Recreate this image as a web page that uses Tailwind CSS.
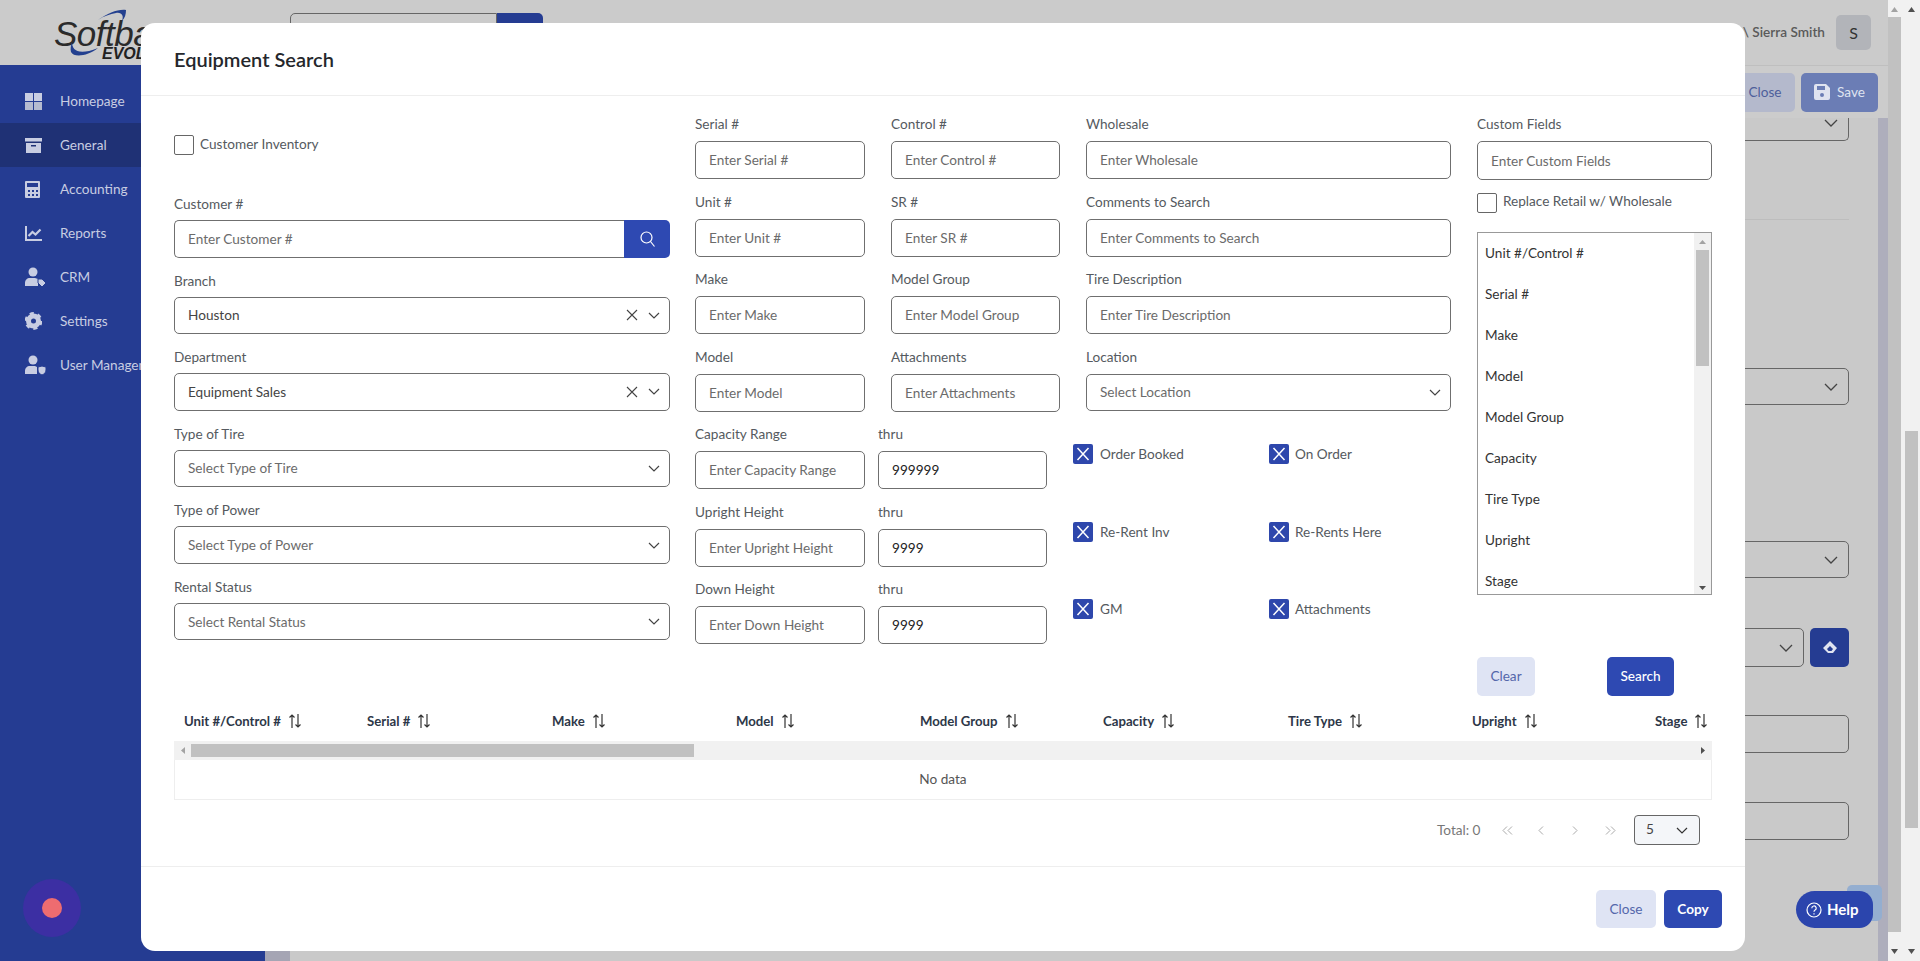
<!DOCTYPE html>
<html lang="en">

<head>
    <meta charset="UTF-8">
    <meta name="viewport" content="width=device-width, initial-scale=1">
    <title>Equipment Search</title>
    <script src="https://cdn.jsdelivr.net/npm/@tailwindcss/browser@4"></script>
</head>

<body class="[font-family:Lato,sans-serif] text-[13.6px]">
    <div class="relative flex h-[961px] w-[1920px] overflow-hidden bg-[#c9c9c9]">

        <!-- page behind the modal -->
        <aside class="flex w-[265px] shrink-0 flex-col">
            <div class="relative h-[65px] bg-[#cbcbcb]">
                <span class="absolute left-[54px] top-[20px] whitespace-nowrap [font-family:'Liberation_Sans',sans-serif] text-[35px] italic leading-[27px] tracking-[-0.5px] text-[#2b2b2b]">Softba</span>
                <span class="absolute left-[102px] top-[47px] [font-family:'Liberation_Sans',sans-serif] text-[16px] font-bold italic leading-[13px] text-[#222]">EVOL</span>
                <svg class="absolute left-[68px] top-[8px]" width="70" height="52" viewBox="0 0 70 52" fill="none">
                    <path d="M30 12C40 5 50 1 58 2C58 6 57 10 54 13C56 8 54 4 48 5C42 6 36 8 30 12Z" fill="#23408f" />
                    <path d="M4 34C4 42 10 48 30 40C20 48 6 50 3 44C2 41 3 37 4 34Z" fill="#23408f" />
                </svg>
            </div>
            <nav class="flex-1 bg-[#253c92] pt-[14px] text-[#c8cde2]">
                <a class="flex h-[44px] items-center gap-[18px] pl-[25px]">
                    <svg width="17" height="17" viewBox="0 0 17 17" fill="#c8cde2"><rect width="8" height="8" /><rect x="9" width="8" height="8" /><rect y="9" width="8" height="8" fill="#b5bbd0" /><rect x="9" y="9" width="8" height="8" fill="#b5bbd0" /></svg>
                    <span>Homepage</span>
                </a>
                <a class="flex h-[44px] items-center gap-[18px] bg-[#1f3175] pl-[25px]">
                    <svg width="17" height="17" viewBox="0 0 17 17" fill="#c8cde2"><rect y="1" width="17" height="3.5" /><path d="M1 6h15v10H1zM6 8v1.5h5V8z" fill-rule="evenodd" /></svg>
                    <span>General</span>
                </a>
                <a class="flex h-[44px] items-center gap-[18px] pl-[25px]">
                    <svg width="17" height="17" viewBox="0 0 17 17" fill="#c8cde2"><path fill-rule="evenodd" d="M1 0h13a1 1 0 0 1 1 1v15a1 1 0 0 1-1 1H1a1 1 0 0 1-1-1V1a1 1 0 0 1 1-1zM2 2v4h11V2zM3 9v2h2V9zM7 9v2h2V9zM11 9v2h2V9zM3 13v2h2v-2zM7 13v2h2v-2zM11 13v2h2v-2z" /></svg>
                    <span>Accounting</span>
                </a>
                <a class="flex h-[44px] items-center gap-[18px] pl-[25px]">
                    <svg width="17" height="17" viewBox="0 0 17 17" fill="none" stroke="#c8cde2"><path d="M1 1v14h16" stroke-width="2" /><path d="M3.5 11l4-4 3 2.500 5-5" stroke-width="2.200" /></svg>
                    <span>Reports</span>
                </a>
                <a class="flex h-[44px] items-center gap-[18px] pl-[25px]">
                    <svg width="21" height="20" viewBox="0 0 21 20" fill="#c8cde2"><circle cx="8" cy="5" r="4.500" /><path d="M0 19v-3c0-3 2-5 5-5h5l3 1v7z" /><path d="M13 12h4l4 4-4 4-4-4z" stroke="#253c92" /></svg>
                    <span class="-ml-[4px]">CRM</span>
                </a>
                <a class="flex h-[44px] items-center gap-[18px] pl-[25px]">
                    <svg width="17" height="18" viewBox="0 0 17 18" fill="none"><circle cx="8.500" cy="9" r="5" stroke="#c8cde2" stroke-width="5" /><circle cx="8.500" cy="9" r="7.500" stroke="#c8cde2" stroke-width="2.800" stroke-dasharray="4 3.850" /></svg>
                    <span>Settings</span>
                </a>
                <a class="flex h-[44px] items-center gap-[18px] pl-[25px]">
                    <svg width="21" height="20" viewBox="0 0 21 20" fill="#c8cde2"><circle cx="8" cy="5" r="4.500" /><path d="M0 19v-3c0-3 2-5 5-5h5l2 1v7z" /><path d="M13 12l4-1 4 1v3c0 3-2 4-4 5-2-1-4-2-4-5z" stroke="#253c92" /></svg>
                    <span class="-ml-[4px] whitespace-nowrap">User Management</span>
                </a>
            </nav>
        </aside>

        <main class="flex min-w-0 flex-1 flex-col">
            <header class="flex h-[65px] items-start justify-between bg-[#cbcbcb] pl-[25px] pr-[17px]">
                <div class="mt-[13px] flex h-[38px] w-[253px]">
                    <div class="flex-1 rounded-l-[5px] border border-[#666]"></div>
                    <div class="w-[46px] rounded-r-[5px] bg-[#253c92]"></div>
                </div>
                <div class="flex items-center gap-[11px] pt-[15px]">
                    <span class="whitespace-nowrap font-semibold text-[#5a5a5a]">\ Sierra Smith</span>
                    <span class="flex h-[35px] w-[35px] items-center justify-center rounded-[5px] bg-[#b2b4b9] text-[16px] text-[#333]">S</span>
                </div>
            </header>
            <div class="flex h-[53px] items-center justify-end gap-[6px] border-t border-[#bfbfbf] bg-[#cccccc] pr-[10px]">
                <button class="h-[39px] w-[60px] rounded-[5px] bg-[#b4b9cc] text-[#4e5f9b]">Close</button>
                <button class="flex h-[39px] w-[77px] items-center justify-center gap-[7px] rounded-[5px] bg-[#6b7db5] text-[#dfe3f0]">
                    <svg width="16" height="16" viewBox="0 0 16 16" fill="#dfe3f0"><path fill-rule="evenodd" d="M2 0h10l4 4v10a2 2 0 0 1-2 2H2a2 2 0 0 1-2-2V2a2 2 0 0 1 2-2zM3 2v4h8V2zM8 9a2 2 0 1 0 0 4 2 2 0 0 0 0-4z" /></svg>
                    Save
                </button>
            </div>
            <div class="flex flex-1">
                <div class="w-[25px] bg-[#a5a5b4]"></div>
                <div class="flex flex-1 flex-col pr-[29px]">
                    <div class="h-[23px] rounded-b-[5px] border border-t-0 border-[#666]">
                        <svg class="ml-auto mr-[10px] mt-[1px]" width="14" height="8" viewBox="0 0 14 8" fill="none" stroke="#444" stroke-width="1.300"><path d="M1 1l6 6 6-6" /></svg>
                    </div>
                    <div class="mt-[78px] h-px bg-[#bdbdbd]"></div>
                    <div class="mt-[148px] flex h-[37px] items-center justify-end rounded-[5px] border border-[#666] pr-[10px]">
                        <svg width="14" height="8" viewBox="0 0 14 8" fill="none" stroke="#444" stroke-width="1.300"><path d="M1 1l6 6 6-6" /></svg>
                    </div>
                    <div class="mt-[136px] flex h-[37px] items-center justify-end rounded-[5px] border border-[#666] pr-[10px]">
                        <svg width="14" height="8" viewBox="0 0 14 8" fill="none" stroke="#444" stroke-width="1.300"><path d="M1 1l6 6 6-6" /></svg>
                    </div>
                    <div class="mt-[50px] flex h-[39px] gap-[6px]">
                        <div class="flex flex-1 items-center justify-end rounded-[5px] border border-[#666] pr-[10px]">
                            <svg width="14" height="8" viewBox="0 0 14 8" fill="none" stroke="#444" stroke-width="1.300"><path d="M1 1l6 6 6-6" /></svg>
                        </div>
                        <div class="flex w-[39px] items-center justify-center rounded-[5px] bg-[#253c92]">
                            <svg width="14" height="13" viewBox="0 0 14 13" fill="#dfe3f0"><path d="M7 0l7 7-4 5H5L0 7zM7 5L4 8l1.500 2h3L10 8z" fill-rule="evenodd" /></svg>
                        </div>
                    </div>
                    <div class="mt-[48px] h-[38px] rounded-[5px] border border-[#666]"></div>
                    <div class="mt-[49px] h-[38px] rounded-[5px] border border-[#666]"></div>
                </div>
                <div class="w-[10px] bg-[#aeaebc]"></div>
            </div>
        </main>

        <!-- page scrollbars -->
        <div class="flex w-[15px] shrink-0 flex-col bg-[#f1f1f1]">
            <svg class="ml-[3px] mt-[7px] shrink-0" width="7" height="5" viewBox="0 0 7 5" fill="#a3a3a3"><path d="M3.500 0L7 5H0z" /></svg>
            <div class="mt-[5px] h-[915px] w-[13px] shrink-0 bg-[#c1c1c1]"></div>
            <svg class="ml-[3px] mt-[17px] shrink-0" width="7" height="5" viewBox="0 0 7 5" fill="#505050"><path d="M0 0h7L3.500 5z" /></svg>
        </div>
        <div class="flex w-[17px] shrink-0 flex-col bg-[#f1f1f1]">
            <svg class="ml-[5px] mt-[7px] shrink-0" width="7" height="5" viewBox="0 0 7 5" fill="#505050"><path d="M3.500 0L7 5H0z" /></svg>
            <div class="ml-[2px] mt-[419px] h-[397px] w-[13px] shrink-0 bg-[#c1c1c1]"></div>
            <svg class="ml-[5px] mt-[121px] shrink-0" width="7" height="5" viewBox="0 0 7 5" fill="#505050"><path d="M0 0h7L3.500 5z" /></svg>
        </div>

        <!-- recording dot, help -->
        <div class="absolute left-[23px] top-[879px] flex h-[58px] w-[58px] items-center justify-center rounded-full bg-[#3c2fa3]">
            <div class="h-[20px] w-[20px] rounded-full bg-[#ee6c70]"></div>
        </div>
        <div class="absolute left-[1847px] top-[885px] h-[36px] w-[35px] rounded-[5px] bg-[#94aed0]"></div>
        <div class="absolute left-[1796px] top-[891px] flex h-[37px] w-[77px] items-center gap-[5px] rounded-l-[19px] rounded-r-[14px] bg-[#2b45ad] pl-[10px] text-[15px] font-bold text-white">
            <svg width="16" height="16" viewBox="0 0 16 16" fill="none" stroke="#fff" stroke-width="1.200"><circle cx="8" cy="8" r="7" /><path d="M5.800 6.200a2.200 2.200 0 1 1 3.300 1.900c-.7.400-1.100.8-1.100 1.600" /><path d="M8 11.200v1.200" /></svg>
            Help
        </div>

        <!-- modal -->
        <div class="absolute left-[141px] top-[23px] flex h-[928px] w-[1604px] flex-col rounded-[14px] bg-white text-[#555a60]">
            <div class="flex h-[73px] shrink-0 items-center border-b border-[#eeeeee] pl-[33px]">
                <h1 class="text-[20px] font-semibold text-[#25272c]">Equipment Search</h1>
            </div>

            <div class="flex h-[604px] shrink-0 pl-[33px] pt-[16px]">
                <!-- left column -->
                <div class="w-[496px] shrink-0">
                    <label class="mt-[23px] flex h-[20px] items-center gap-[6px]">
                        <span class="h-[20px] w-[20px] rounded-[2px] border border-[#666]"></span>
                        <span class="-mt-[2px]">Customer Inventory</span>
                    </label>
                    <div class="mt-[37px] grid auto-rows-[76.6px]">
                        <div>
                            <div class="mb-[4px] h-[24px] leading-[24px]">Customer #</div>
                            <div class="flex h-[37.500px]">
                                <input class="h-full min-w-0 flex-1 rounded-l-[5px] border border-r-0 border-[#6f6f6f] px-[13px] outline-none placeholder:text-[#6b6b6b]" placeholder="Enter Customer #">
                                <button class="flex w-[46px] items-center justify-center rounded-r-[5px] bg-[#2e49b2]">
                                    <svg width="15" height="16" viewBox="0 0 15 16" fill="none" stroke="#fff" stroke-width="1.200"><circle cx="6.500" cy="6.500" r="5.500" /><path d="M10.500 10.500l4 5" /></svg>
                                </button>
                            </div>
                        </div>
                        <div>
                            <div class="mb-[4px] h-[24px] leading-[24px]">Branch</div>
                            <div class="flex h-[37.500px] items-center rounded-[5px] border border-[#6f6f6f] pl-[13px] pr-[9px] text-[#444]">
                                <span class="flex-1">Houston</span>
                                <svg class="mr-[10px]" width="12" height="12" viewBox="0 0 12 12" fill="none" stroke="#444" stroke-width="1.100"><path d="M1 1l10 10M11 1L1 11" /></svg>
                                <svg width="12" height="7" viewBox="0 0 12 7" fill="none" stroke="#444" stroke-width="1.200"><path d="M1 1l5 5 5-5" /></svg>
                            </div>
                        </div>
                        <div>
                            <div class="mb-[4px] h-[24px] leading-[24px]">Department</div>
                            <div class="flex h-[37.500px] items-center rounded-[5px] border border-[#6f6f6f] pl-[13px] pr-[9px] text-[#444]">
                                <span class="flex-1">Equipment Sales</span>
                                <svg class="mr-[10px]" width="12" height="12" viewBox="0 0 12 12" fill="none" stroke="#444" stroke-width="1.100"><path d="M1 1l10 10M11 1L1 11" /></svg>
                                <svg width="12" height="7" viewBox="0 0 12 7" fill="none" stroke="#444" stroke-width="1.200"><path d="M1 1l5 5 5-5" /></svg>
                            </div>
                        </div>
                        <div>
                            <div class="mb-[4px] h-[24px] leading-[24px]">Type of Tire</div>
                            <div class="flex h-[37.500px] items-center justify-between rounded-[5px] border border-[#6f6f6f] pl-[13px] pr-[9px] text-[#6b6b6b]">
                                Select Type of Tire
                                <svg width="12" height="7" viewBox="0 0 12 7" fill="none" stroke="#444" stroke-width="1.200"><path d="M1 1l5 5 5-5" /></svg>
                            </div>
                        </div>
                        <div>
                            <div class="mb-[4px] h-[24px] leading-[24px]">Type of Power</div>
                            <div class="flex h-[37.500px] items-center justify-between rounded-[5px] border border-[#6f6f6f] pl-[13px] pr-[9px] text-[#6b6b6b]">
                                Select Type of Power
                                <svg width="12" height="7" viewBox="0 0 12 7" fill="none" stroke="#444" stroke-width="1.200"><path d="M1 1l5 5 5-5" /></svg>
                            </div>
                        </div>
                        <div>
                            <div class="mb-[4px] h-[24px] leading-[24px]">Rental Status</div>
                            <div class="flex h-[37.500px] items-center justify-between rounded-[5px] border border-[#6f6f6f] pl-[13px] pr-[9px] text-[#6b6b6b]">
                                Select Rental Status
                                <svg width="12" height="7" viewBox="0 0 12 7" fill="none" stroke="#444" stroke-width="1.200"><path d="M1 1l5 5 5-5" /></svg>
                            </div>
                        </div>
                    </div>
                </div>

                <!-- middle columns -->
                <div class="ml-[25px] grid w-[755px] shrink-0 auto-rows-[77.5px]">
                    <div class="flex gap-[26px]">
                        <div class="w-[170px]"><div class="mb-[5px] h-[24px] leading-[24px]">Serial #</div><input class="h-[38px] w-full rounded-[5px] border border-[#6f6f6f] px-[13px] outline-none placeholder:text-[#6b6b6b]" placeholder="Enter Serial #"></div>
                        <div class="w-[169px]"><div class="mb-[5px] h-[24px] leading-[24px]">Control #</div><input class="h-[38px] w-full rounded-[5px] border border-[#6f6f6f] px-[13px] outline-none placeholder:text-[#6b6b6b]" placeholder="Enter Control #"></div>
                        <div class="w-[365px]"><div class="mb-[5px] h-[24px] leading-[24px]">Wholesale</div><input class="h-[38px] w-full rounded-[5px] border border-[#6f6f6f] px-[13px] outline-none placeholder:text-[#6b6b6b]" placeholder="Enter Wholesale"></div>
                    </div>
                    <div class="flex gap-[26px]">
                        <div class="w-[170px]"><div class="mb-[5px] h-[24px] leading-[24px]">Unit #</div><input class="h-[38px] w-full rounded-[5px] border border-[#6f6f6f] px-[13px] outline-none placeholder:text-[#6b6b6b]" placeholder="Enter Unit #"></div>
                        <div class="w-[169px]"><div class="mb-[5px] h-[24px] leading-[24px]">SR #</div><input class="h-[38px] w-full rounded-[5px] border border-[#6f6f6f] px-[13px] outline-none placeholder:text-[#6b6b6b]" placeholder="Enter SR #"></div>
                        <div class="w-[365px]"><div class="mb-[5px] h-[24px] leading-[24px]">Comments to Search</div><input class="h-[38px] w-full rounded-[5px] border border-[#6f6f6f] px-[13px] outline-none placeholder:text-[#6b6b6b]" placeholder="Enter Comments to Search"></div>
                    </div>
                    <div class="flex gap-[26px]">
                        <div class="w-[170px]"><div class="mb-[5px] h-[24px] leading-[24px]">Make</div><input class="h-[38px] w-full rounded-[5px] border border-[#6f6f6f] px-[13px] outline-none placeholder:text-[#6b6b6b]" placeholder="Enter Make"></div>
                        <div class="w-[169px]"><div class="mb-[5px] h-[24px] leading-[24px]">Model Group</div><input class="h-[38px] w-full rounded-[5px] border border-[#6f6f6f] px-[13px] outline-none placeholder:text-[#6b6b6b]" placeholder="Enter Model Group"></div>
                        <div class="w-[365px]"><div class="mb-[5px] h-[24px] leading-[24px]">Tire Description</div><input class="h-[38px] w-full rounded-[5px] border border-[#6f6f6f] px-[13px] outline-none placeholder:text-[#6b6b6b]" placeholder="Enter Tire Description"></div>
                    </div>
                    <div class="flex gap-[26px]">
                        <div class="w-[170px]"><div class="mb-[5px] h-[24px] leading-[24px]">Model</div><input class="h-[38px] w-full rounded-[5px] border border-[#6f6f6f] px-[13px] outline-none placeholder:text-[#6b6b6b]" placeholder="Enter Model"></div>
                        <div class="w-[169px]"><div class="mb-[5px] h-[24px] leading-[24px]">Attachments</div><input class="h-[38px] w-full rounded-[5px] border border-[#6f6f6f] px-[13px] outline-none placeholder:text-[#6b6b6b]" placeholder="Enter Attachments"></div>
                        <div class="w-[365px]">
                            <div class="mb-[5px] h-[24px] leading-[24px]">Location</div>
                            <div class="flex h-[37px] items-center justify-between rounded-[5px] border border-[#6f6f6f] pl-[13px] pr-[9px] text-[#6b6b6b]">
                                Select Location
                                <svg width="12" height="7" viewBox="0 0 12 7" fill="none" stroke="#444" stroke-width="1.200"><path d="M1 1l5 5 5-5" /></svg>
                            </div>
                        </div>
                    </div>
                    <div class="flex">
                        <div class="w-[170px]"><div class="mb-[5px] h-[24px] leading-[24px]">Capacity Range</div><input class="h-[38px] w-full rounded-[5px] border border-[#6f6f6f] px-[13px] outline-none placeholder:text-[#6b6b6b]" placeholder="Enter Capacity Range"></div>
                        <div class="ml-[13px] w-[169px]"><div class="mb-[5px] h-[24px] leading-[24px]">thru</div><input class="h-[38px] w-full rounded-[5px] border border-[#6f6f6f] px-[13px] text-[#222] outline-none" value="999999"></div>
                        <div class="ml-[26px] flex w-[196px] gap-[7px] pt-[22px]">
                            <span class="flex h-[20px] w-[20px] items-center justify-center rounded-[2px] bg-[#2e47ac]"><svg width="14" height="14" viewBox="0 0 14 14" fill="none" stroke="#fff" stroke-width="1.500"><path d="M1.500 1l11 12M12.500 1l-11 12" /></svg></span>
                            <span>Order Booked</span>
                        </div>
                        <div class="flex gap-[6px] pt-[22px]">
                            <span class="flex h-[20px] w-[20px] items-center justify-center rounded-[2px] bg-[#2e47ac]"><svg width="14" height="14" viewBox="0 0 14 14" fill="none" stroke="#fff" stroke-width="1.500"><path d="M1.500 1l11 12M12.500 1l-11 12" /></svg></span>
                            <span>On Order</span>
                        </div>
                    </div>
                    <div class="flex">
                        <div class="w-[170px]"><div class="mb-[5px] h-[24px] leading-[24px]">Upright Height</div><input class="h-[38px] w-full rounded-[5px] border border-[#6f6f6f] px-[13px] outline-none placeholder:text-[#6b6b6b]" placeholder="Enter Upright Height"></div>
                        <div class="ml-[13px] w-[169px]"><div class="mb-[5px] h-[24px] leading-[24px]">thru</div><input class="h-[38px] w-full rounded-[5px] border border-[#6f6f6f] px-[13px] text-[#222] outline-none" value="9999"></div>
                        <div class="ml-[26px] flex w-[196px] gap-[7px] pt-[22px]">
                            <span class="flex h-[20px] w-[20px] items-center justify-center rounded-[2px] bg-[#2e47ac]"><svg width="14" height="14" viewBox="0 0 14 14" fill="none" stroke="#fff" stroke-width="1.500"><path d="M1.500 1l11 12M12.500 1l-11 12" /></svg></span>
                            <span>Re-Rent Inv</span>
                        </div>
                        <div class="flex gap-[6px] pt-[22px]">
                            <span class="flex h-[20px] w-[20px] items-center justify-center rounded-[2px] bg-[#2e47ac]"><svg width="14" height="14" viewBox="0 0 14 14" fill="none" stroke="#fff" stroke-width="1.500"><path d="M1.500 1l11 12M12.500 1l-11 12" /></svg></span>
                            <span>Re-Rents Here</span>
                        </div>
                    </div>
                    <div class="flex">
                        <div class="w-[170px]"><div class="mb-[5px] h-[24px] leading-[24px]">Down Height</div><input class="h-[38px] w-full rounded-[5px] border border-[#6f6f6f] px-[13px] outline-none placeholder:text-[#6b6b6b]" placeholder="Enter Down Height"></div>
                        <div class="ml-[13px] w-[169px]"><div class="mb-[5px] h-[24px] leading-[24px]">thru</div><input class="h-[38px] w-full rounded-[5px] border border-[#6f6f6f] px-[13px] text-[#222] outline-none" value="9999"></div>
                        <div class="ml-[26px] flex w-[196px] gap-[7px] pt-[22px]">
                            <span class="flex h-[20px] w-[20px] items-center justify-center rounded-[2px] bg-[#2e47ac]"><svg width="14" height="14" viewBox="0 0 14 14" fill="none" stroke="#fff" stroke-width="1.500"><path d="M1.500 1l11 12M12.500 1l-11 12" /></svg></span>
                            <span>GM</span>
                        </div>
                        <div class="flex gap-[6px] pt-[22px]">
                            <span class="flex h-[20px] w-[20px] items-center justify-center rounded-[2px] bg-[#2e47ac]"><svg width="14" height="14" viewBox="0 0 14 14" fill="none" stroke="#fff" stroke-width="1.500"><path d="M1.500 1l11 12M12.500 1l-11 12" /></svg></span>
                            <span>Attachments</span>
                        </div>
                    </div>
                </div>

                <!-- right column -->
                <div class="ml-[27px] w-[235px] shrink-0">
                    <div class="mb-[5px] h-[24px] leading-[24px]">Custom Fields</div>
                    <input class="h-[39px] w-full rounded-[5px] border border-[#6f6f6f] px-[13px] outline-none placeholder:text-[#6b6b6b]" placeholder="Enter Custom Fields">
                    <label class="mt-[13px] flex h-[20px] items-center gap-[6px]">
                        <span class="h-[20px] w-[20px] rounded-[2px] border border-[#666]"></span>
                        <span class="-mt-[3px]">Replace Retail w/ Wholesale</span>
                    </label>
                    <div class="mt-[19px] flex h-[363px] overflow-hidden border border-[#999]">
                        <ul class="flex-1 pl-[7px] text-[#333]">
                            <li class="h-[41px] leading-[41px]">Unit #/Control #</li>
                            <li class="h-[41px] leading-[41px]">Serial #</li>
                            <li class="h-[41px] leading-[41px]">Make</li>
                            <li class="h-[41px] leading-[41px]">Model</li>
                            <li class="h-[41px] leading-[41px]">Model Group</li>
                            <li class="h-[41px] leading-[41px]">Capacity</li>
                            <li class="h-[41px] leading-[41px]">Tire Type</li>
                            <li class="h-[41px] leading-[41px]">Upright</li>
                            <li class="h-[41px] leading-[41px]">Stage</li>
                        </ul>
                        <div class="flex w-[17px] flex-col items-center bg-[#f1f1f1] pt-[7px]">
                            <svg class="shrink-0" width="7" height="4" viewBox="0 0 7 4" fill="#a3a3a3"><path d="M3.500 0L7 4H0z" /></svg>
                            <div class="mt-[6px] h-[116px] w-[13px] shrink-0 bg-[#c1c1c1]"></div>
                            <svg class="mt-[220px] shrink-0" width="7" height="4" viewBox="0 0 7 4" fill="#505050"><path d="M0 0h7L3.500 4z" /></svg>
                        </div>
                    </div>
                    <div class="mt-[62px] flex gap-[72px]">
                        <button class="h-[39px] w-[58px] rounded-[5px] bg-[#dfe4f4] text-[#5467ab]">Clear</button>
                        <button class="h-[39px] w-[67px] rounded-[5px] bg-[#2e49b2] font-medium text-white">Search</button>
                    </div>
                </div>
            </div>

            <!-- results table -->
            <div class="ml-[33px] w-[1538px] shrink-0 overflow-hidden">
                <div class="flex h-[41px] w-[1680px] items-center pt-[2px] text-[13.200px] font-bold text-[#2d3748]">
                    <div class="flex w-[184px] shrink-0 items-center gap-[7px] pl-[10px]">Unit #/Control # <svg width="14" height="14" viewBox="0 0 14 14" fill="none" stroke="#333" stroke-width="1.200"><path d="M4 14V1M1.500 3.500L4 1l2.500 2.500M10 0v13M7.500 10.500L10 13l2.500-2.500" /></svg></div>
                    <div class="flex w-[184px] shrink-0 items-center gap-[7px] pl-[9px]">Serial # <svg width="14" height="14" viewBox="0 0 14 14" fill="none" stroke="#333" stroke-width="1.200"><path d="M4 14V1M1.500 3.500L4 1l2.500 2.500M10 0v13M7.500 10.500L10 13l2.500-2.500" /></svg></div>
                    <div class="flex w-[184px] shrink-0 items-center gap-[7px] pl-[10px]">Make <svg width="14" height="14" viewBox="0 0 14 14" fill="none" stroke="#333" stroke-width="1.200"><path d="M4 14V1M1.500 3.500L4 1l2.500 2.500M10 0v13M7.500 10.500L10 13l2.500-2.500" /></svg></div>
                    <div class="flex w-[184px] shrink-0 items-center gap-[7px] pl-[10px]">Model <svg width="14" height="14" viewBox="0 0 14 14" fill="none" stroke="#333" stroke-width="1.200"><path d="M4 14V1M1.500 3.500L4 1l2.500 2.500M10 0v13M7.500 10.500L10 13l2.500-2.500" /></svg></div>
                    <div class="flex w-[184px] shrink-0 items-center gap-[7px] pl-[10px]">Model Group <svg width="14" height="14" viewBox="0 0 14 14" fill="none" stroke="#333" stroke-width="1.200"><path d="M4 14V1M1.500 3.500L4 1l2.500 2.500M10 0v13M7.500 10.500L10 13l2.500-2.500" /></svg></div>
                    <div class="flex w-[184px] shrink-0 items-center gap-[7px] pl-[9px]">Capacity <svg width="14" height="14" viewBox="0 0 14 14" fill="none" stroke="#333" stroke-width="1.200"><path d="M4 14V1M1.500 3.500L4 1l2.500 2.500M10 0v13M7.500 10.500L10 13l2.500-2.500" /></svg></div>
                    <div class="flex w-[184px] shrink-0 items-center gap-[7px] pl-[10px]">Tire Type <svg width="14" height="14" viewBox="0 0 14 14" fill="none" stroke="#333" stroke-width="1.200"><path d="M4 14V1M1.500 3.500L4 1l2.500 2.500M10 0v13M7.500 10.500L10 13l2.500-2.500" /></svg></div>
                    <div class="flex w-[184px] shrink-0 items-center gap-[7px] pl-[10px]">Upright <svg width="14" height="14" viewBox="0 0 14 14" fill="none" stroke="#333" stroke-width="1.200"><path d="M4 14V1M1.500 3.500L4 1l2.500 2.500M10 0v13M7.500 10.500L10 13l2.500-2.500" /></svg></div>
                    <div class="flex w-[184px] shrink-0 items-center gap-[7px] pl-[9px]">Stage <svg width="14" height="14" viewBox="0 0 14 14" fill="none" stroke="#333" stroke-width="1.200"><path d="M4 14V1M1.500 3.500L4 1l2.500 2.500M10 0v13M7.500 10.500L10 13l2.500-2.500" /></svg></div>
                </div>
                <div class="flex h-[19px] items-center bg-[#f1f1f1]">
                    <svg class="ml-[7px]" width="4" height="7" viewBox="0 0 4 7" fill="#a3a3a3"><path d="M4 0v7L0 3.500z" /></svg>
                    <div class="ml-[6px] h-[13px] w-[503px] bg-[#c1c1c1]"></div>
                    <svg class="ml-auto mr-[7px]" width="4" height="7" viewBox="0 0 4 7" fill="#505050"><path d="M0 0v7l4-3.500z" /></svg>
                </div>
                <div class="flex h-[40px] items-center justify-center border-x border-b border-[#eeeeee] text-[#555]">No data</div>
            </div>

            <!-- pagination -->
            <div class="ml-[33px] mr-[45px] mt-[15px] flex h-[30px] shrink-0 items-center justify-end text-[#777]">
                <span class="mr-[21px]">Total: 0</span>
                <svg class="mr-[25.500px]" width="11" height="9" viewBox="0 0 11 9" fill="none" stroke="#aaa"><path d="M5 .500l-4 4 4 4M10 .500l-4 4 4 4" /></svg>
                <svg class="mr-[28px]" width="6" height="9" viewBox="0 0 6 9" fill="none" stroke="#aaa"><path d="M5 .500l-4 4 4 4" /></svg>
                <svg class="mr-[26.500px]" width="6" height="9" viewBox="0 0 6 9" fill="none" stroke="#aaa"><path d="M1 .500l4 4-4 4" /></svg>
                <svg class="mr-[18.500px]" width="11" height="9" viewBox="0 0 11 9" fill="none" stroke="#aaa"><path d="M1 .500l4 4-4 4M6 .500l4 4-4 4" /></svg>
                <div class="flex h-[30px] w-[66px] items-center justify-between rounded-[4px] border border-[#666] bg-[#f4f6f9] pl-[11px] pr-[11px] text-[#444]">
                    <span class="-mt-[2px]">5</span>
                    <svg width="12" height="7" viewBox="0 0 12 7" fill="none" stroke="#333" stroke-width="1.200"><path d="M1 1l5 5 5-5" /></svg>
                </div>
            </div>

            <div class="mt-[21px] flex flex-1 items-center justify-end gap-[8px] border-t border-[#eeeeee] pr-[23px]">
                <button class="h-[38px] w-[60px] rounded-[5px] bg-[#dfe4f4] text-[#5467ab]">Close</button>
                <button class="h-[38px] w-[58px] rounded-[5px] bg-[#2e49b2] font-bold text-white">Copy</button>
            </div>
        </div>
    </div>
</body>

</html>
